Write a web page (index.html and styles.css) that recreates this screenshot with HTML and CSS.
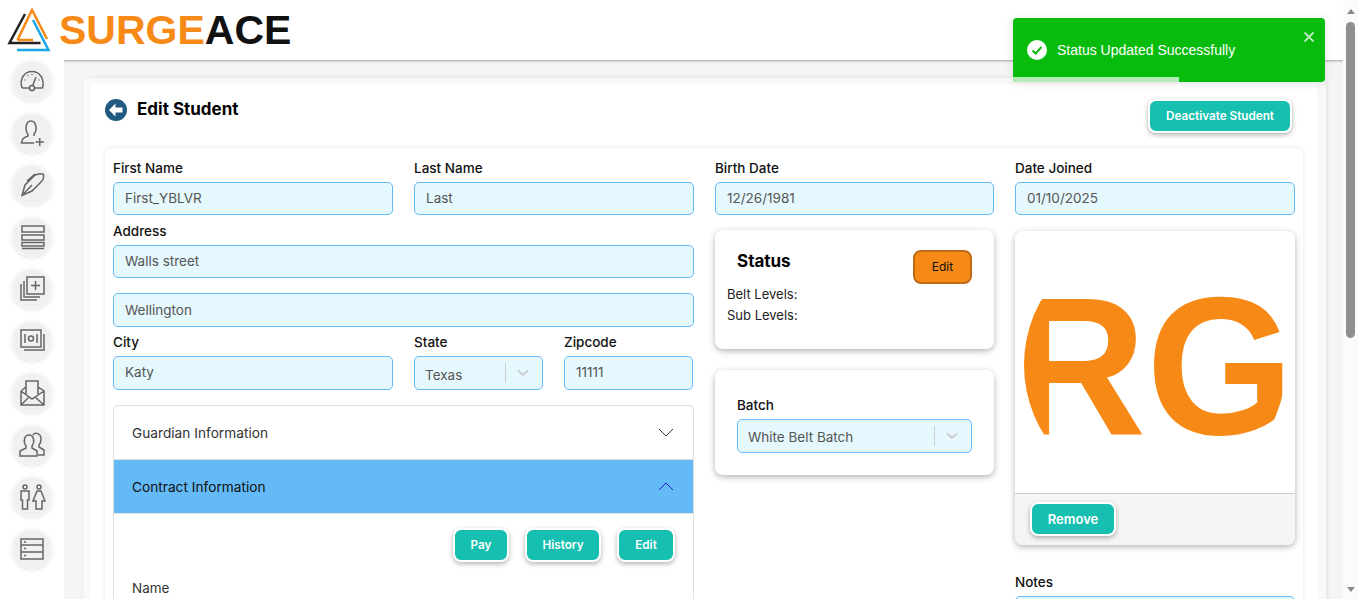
FILE: index.html
```html
<!DOCTYPE html>
<html lang="en">
<head>
    <meta charset="UTF-8">
    <meta name="viewport" content="width=device-width, initial-scale=1.0">
    <title>Edit Student</title>
    <link rel="stylesheet" href="styles.css">
</head>
<body>
    <div class="window">
        <div class="page">
            <header class="topbar">
                <svg class="logo-mark" width="44" height="44" viewBox="0 0 44 44" fill="none">
                    <path d="M18 6 L2.500 35 H33.500" stroke="#222" stroke-width="2.500"/>
                    <path d="M10.500 32 L25 2 L40 31 M10.500 32 H26" stroke="#f78a16" stroke-width="2.500"/>
                    <path d="M26 12 L41.500 42 H10" stroke="#1aa7e8" stroke-width="2.500"/>
                </svg>
                <div class="logo-text"><span class="logo-orange">SURGE</span>ACE</div>
            </header>

            <div class="below">
                <nav class="rail">
                    <a class="rail-btn"><svg viewBox="0 0 28 28"><path d="M4 21 C1 11 7 4.500 14 4.500 C21 4.500 27 11 24.500 21 H16.500 M11.500 21 H4 M14.500 19 L18 10"/><circle cx="14" cy="21" r="2.500"/><path d="M6.500 13 h1 M9.500 8.500 h1 M14 7 v1 M20.500 13 h1"/></svg></a>
                    <a class="rail-btn"><svg viewBox="0 0 28 28"><path d="M10 15 C7 12 7 2 13 2 C19 2 19 12 16 15 V17 M10 15 V17 C5 19 4 20 3.500 24 H16"/><path d="M17.500 23 H26 M21.750 19 V27"/></svg></a>
                    <a class="rail-btn"><svg viewBox="0 0 28 28"><path d="M4 24.500 L7 14 L16 5 C18 3 23 2 25.500 3.500 C26 6 25 9 23 11 L14 20 Z M4 24.500 L14 14 M9 10 L17 3"/></svg></a>
                    <a class="rail-btn"><svg viewBox="0 0 28 28"><path d="M4 3 H26 V9 H4 Z M4 12 H26 V17 H4 Z M4 19.500 H26 V23 H4 Z M4 25.500 H26"/></svg></a>
                    <a class="rail-btn"><svg viewBox="0 0 28 28"><path d="M9 2 H26 V19 H9 Z M17.500 6 V15 M13 10.500 H22 M6 6 V22 H22 M3 9 V25 H19"/></svg></a>
                    <a class="rail-btn"><svg viewBox="0 0 28 28"><path d="M3 3 H23 V20 H3 Z M6 23 H26 V7 M7 7 V16 M19 7 V16"/><circle cx="13" cy="11.500" r="2.500"/></svg></a>
                    <a class="rail-btn"><svg viewBox="0 0 28 28"><path d="M3 12 V26 H26 V12 L20 8 M3 12 L8 8 M8 15 V2 H20 V15 M3 12 L14 20 L26 12 M3 26 L11 18 M26 26 L17 18"/></svg></a>
                    <a class="rail-btn"><svg viewBox="0 0 28 28"><path d="M8 15 C5 11 6 4 11 4 C16 4 17 11 14 15 V17 L19 20 V25 H2 V20 L8 17 Z M15 4 C17 1 23 2 23 8 C23 11 22 13 21 14 V16 L26 19 V24 H20"/></svg></a>
                    <a class="rail-btn"><svg viewBox="0 0 28 28"><circle cx="7" cy="4" r="2"/><circle cx="21" cy="4" r="2"/><path d="M3 8 H11 V17 H9.500 V26 H4.500 V17 H3 Z M19 8 H23 L27 18 H24 V26 H18 V18 H15 Z"/></svg></a>
                    <a class="rail-btn"><svg viewBox="0 0 28 28"><path d="M3 4 H25 V10 H3 Z M3 10 H25 V17 H3 Z M3 17 H25 V24 H3 Z M6 7 h2 M6 13.500 h2 M6 20.500 h2"/></svg></a>
                </nav>

                <main class="main">
                    <section class="outer-card">
                        <div class="card-inner">
                            <div class="title-row">
                                <div class="title-left">
                                    <svg class="back-icon" width="22" height="22" viewBox="0 0 22 22">
                                        <circle cx="11" cy="11" r="11" fill="#215a80"/>
                                        <path d="M10.500 4.500 L4 11 L10.500 17.500 V13.500 H17.500 V8.500 H10.500 Z" fill="#fff"/>
                                    </svg>
                                    <h1 class="page-title">Edit Student</h1>
                                </div>
                                <button class="btn btn-deactivate">Deactivate Student</button>
                            </div>

                            <div class="form-card">
                                <div class="form-grid">
                                    <div class="col-wide">
                                        <div class="row-two">
                                            <div>
                                                <label class="field-label">First Name</label>
                                                <div class="input">First_YBLVR</div>
                                            </div>
                                            <div>
                                                <label class="field-label">Last Name</label>
                                                <div class="input">Last</div>
                                            </div>
                                        </div>
                                        <div class="field-address">
                                            <label class="field-label">Address</label>
                                            <div class="input">Walls street</div>
                                        </div>
                                        <div class="input input-second">Wellington</div>
                                        <div class="row-city">
                                            <div>
                                                <label class="field-label">City</label>
                                                <div class="input">Katy</div>
                                            </div>
                                            <div>
                                                <label class="field-label">State</label>
                                                <div class="input select">
                                                    <span class="select-value">Texas</span>
                                                    <span class="select-bar"></span>
                                                    <svg class="select-arrow" width="14" height="8" viewBox="0 0 14 8"><path d="M2 1.500 L7 6 L12 1.500"/></svg>
                                                </div>
                                            </div>
                                            <div>
                                                <label class="field-label">Zipcode</label>
                                                <div class="input">11111</div>
                                            </div>
                                        </div>

                                        <div class="accordion">
                                            <div class="acc-head">
                                                <span>Guardian Information</span>
                                                <svg width="16" height="9" viewBox="0 0 16 9"><path d="M1 1 L8 8 L15 1" class="acc-arrow"/></svg>
                                            </div>
                                            <div class="acc-head acc-open">
                                                <span>Contract Information</span>
                                                <svg width="16" height="9" viewBox="0 0 16 9"><path d="M1 8 L8 1 L15 8" class="acc-arrow acc-arrow-open"/></svg>
                                            </div>
                                            <div class="acc-body">
                                                <div class="acc-actions">
                                                    <button class="btn btn-pay">Pay</button>
                                                    <button class="btn btn-history">History</button>
                                                    <button class="btn btn-edit">Edit</button>
                                                </div>
                                                <div class="acc-label">Name</div>
                                            </div>
                                        </div>
                                    </div>

                                    <div class="col">
                                        <div>
                                            <label class="field-label">Birth Date</label>
                                            <div class="input">12/26/1981</div>
                                        </div>
                                        <div class="status-card">
                                            <div class="status-top">
                                                <h2 class="status-title">Status</h2>
                                                <button class="btn-orange">Edit</button>
                                            </div>
                                            <div class="status-line">Belt Levels:</div>
                                            <div class="status-line">Sub Levels:</div>
                                        </div>
                                        <div class="batch-card">
                                            <label class="field-label">Batch</label>
                                            <div class="input select">
                                                <span class="select-value">White Belt Batch</span>
                                                <span class="select-bar"></span>
                                                <svg class="select-arrow" width="14" height="8" viewBox="0 0 14 8"><path d="M2 1.500 L7 6 L12 1.500"/></svg>
                                            </div>
                                        </div>
                                    </div>

                                    <div class="col">
                                        <div>
                                            <label class="field-label">Date Joined</label>
                                            <div class="input">01/10/2025</div>
                                        </div>
                                        <div class="photo-card">
                                            <div class="photo-area">
                                                <div class="photo-circle"><span class="photo-initials">RG</span></div>
                                            </div>
                                            <div class="photo-foot">
                                                <button class="btn btn-remove">Remove</button>
                                            </div>
                                        </div>
                                        <div class="notes-field">
                                            <label class="field-label">Notes</label>
                                            <div class="input"></div>
                                        </div>
                                    </div>
                                </div>
                            </div>
                        </div>
                    </section>
                </main>
            </div>
        </div>

        <div class="scrollbar">
            <span class="scroll-up"></span>
            <span class="scroll-thumb"></span>
            <span class="scroll-down"></span>
        </div>

        <div class="toast">
            <svg width="20" height="20" viewBox="0 0 20 20">
                <circle cx="10" cy="10" r="10" fill="#fff"/>
                <path d="M5.500 10.500 L8.700 13.500 L14.500 6.800" fill="none" stroke="#07bc0c" stroke-width="2"/>
            </svg>
            <span class="toast-text">Status Updated Successfully</span>
            <svg class="toast-close" width="10" height="10" viewBox="0 0 10 10"><path d="M0.500 0.500 L9.500 9.500 M9.500 0.500 L0.500 9.500"/></svg>
            <div class="toast-progress"></div>
        </div>
    </div>
</body>
</html>
```

FILE: styles.css
```css
* {
    box-sizing: border-box;
}
html, body {
    margin: 0;
    height: 100%;
    overflow: hidden;
}
body {
    font-family: Inter, "Noto Sans", sans-serif;
    font-size: 14px;
    color: #111;
    background-color: #fff;
}
.window {
    position: relative;
    display: flex;
    height: 599px;
    overflow: hidden;
}
.page {
    flex: 1;
    min-width: 0;
    display: flex;
    flex-direction: column;
}

/* top */
.topbar {
    height: 60px;
    flex-shrink: 0;
    display: flex;
    align-items: flex-start;
    padding: 8px 0 0 7px;
    background-color: #fff;
}
.logo-text {
    margin-left: 8px;
    font-family: "Liberation Sans", Arial, sans-serif;
    font-weight: 700;
    font-size: 41px;
    line-height: 45px;
    color: #111;
}
.logo-orange {
    color: #f78a16;
}

/* left icons */
.below {
    flex: 1;
    display: flex;
    min-height: 0;
}
.rail {
    width: 64px;
    flex-shrink: 0;
    display: flex;
    flex-direction: column;
    align-items: center;
    gap: 12px;
    padding-top: 1px;
    background-color: #fff;
}
.rail-btn {
    width: 40px;
    height: 40px;
    flex-shrink: 0;
    display: flex;
    align-items: center;
    justify-content: center;
    border-radius: 50%;
    background-color: #f0f0f0;
    border: 1px solid #fafafa;
    box-shadow: 0 1px 4px rgba(0, 0, 0, 0.12);
}
.rail-btn svg {
    width: 28px;
    height: 28px;
    flex-shrink: 0;
    fill: none;
    stroke: #666;
    stroke-width: 1.500;
}

/* main */
.main {
    flex: 1;
    min-width: 0;
    padding: 18px 0 0 19px;
    background: linear-gradient(#a8a8a8, #d0d0d0 1px, #f5f5f5 3px);
}
.outer-card {
    width: 1243px;
    padding: 6px 9px 0 8px;
    border-radius: 8px 8px 0 0;
    background-color: #f9f9f9;
    box-shadow: 1px 0 4px rgba(0, 0, 0, 0.1);
}
.card-inner {
    padding: 0 14px;
    background-color: #fff;
}
.title-row {
    display: flex;
    justify-content: space-between;
    align-items: flex-start;
    height: 64px;
    padding: 15px 11px 0 0;
}
.title-left {
    display: flex;
    align-items: center;
    gap: 10px;
}
.page-title {
    margin: 0 0 2px 0;
    font-size: 17px;
    font-weight: 700;
    color: #000;
}
.btn {
    height: 34px;
    border: 2px solid #fff;
    border-radius: 8px;
    background-color: #16bfb0;
    color: #fff;
    font-family: inherit;
    font-size: 11.700px;
    font-weight: 600;
    box-shadow: 0 2px 5px rgba(0, 0, 0, 0.3);
}
.btn-deactivate {
    width: 144px;
}

/* form */
.form-card {
    padding: 8px;
    border-radius: 8px;
    background-color: #fff;
    box-shadow: 0 0 5px rgba(0, 0, 0, 0.1);
}
.form-grid {
    display: grid;
    grid-template-columns: 581px 279px 280px;
    column-gap: 21px;
}
.col-wide, .col {
    display: flex;
    flex-direction: column;
}
.row-two {
    display: grid;
    grid-template-columns: 280px 280px;
    column-gap: 21px;
}
.row-city {
    display: grid;
    grid-template-columns: 280px 129px 129px;
    column-gap: 21px;
    margin-top: 3px;
}
.field-label {
    display: block;
    height: 26px;
    line-height: 24px;
    font-size: 13.500px;
    font-weight: 500;
    color: #111;
}
.field-address {
    margin-top: 4px;
}
.input {
    height: 33px;
    display: flex;
    align-items: center;
    padding: 0 11px 2px 11px;
    border: 1px solid #63baf7;
    border-radius: 5px;
    background-color: #e5f8fd;
    font-size: 13.500px;
    color: #555;
}
.input-second {
    height: 34px;
    margin-top: 15px;
    padding-bottom: 0;
}
.row-city .input {
    height: 34px;
}
.input.select {
    padding: 0 12px 0 10px;
}
.select-value {
    flex: 1;
    padding-top: 3px;
}
.batch-card .select-value {
    padding-top: 1px;
}
.select-bar {
    width: 1px;
    height: 20px;
    background-color: #ccc;
}
.select-arrow {
    margin-left: 10px;
}
.select-arrow path {
    fill: none;
    stroke: #ccc;
    stroke-width: 2;
}

/* accordion */
.accordion {
    margin-top: 15px;
    height: 260px;
    border: 1px solid #dedede;
    border-radius: 5px 5px 0 0;
    background-color: #fff;
}
.acc-head {
    height: 54px;
    display: flex;
    align-items: center;
    justify-content: space-between;
    padding: 0 19px 0 18px;
    border-bottom: 1px solid #dedede;
    font-size: 13.700px;
    color: #333;
}
.acc-open {
    background-color: #63baf7;
    color: #111;
}
.acc-arrow {
    fill: none;
    stroke: #333;
    stroke-width: 1;
}
.acc-arrow-open {
    stroke: #2020c0;
}
.acc-body {
    padding: 14px 18px 0 18px;
}
.acc-actions {
    display: flex;
    justify-content: flex-end;
    gap: 16px;
}
.btn-pay {
    width: 56px;
}
.btn-history {
    width: 76px;
}
.btn-edit {
    width: 58px;
}
.acc-label {
    margin-top: 18px;
    font-size: 13.500px;
    color: #333;
}

/* status */
.status-card {
    height: 119px;
    margin-top: 15px;
    padding: 20px 22px 0 12px;
    border-radius: 8px;
    background-color: #fff;
    box-shadow: 0 2px 6px rgba(0, 0, 0, 0.3);
}
.status-top {
    display: flex;
    justify-content: space-between;
    align-items: flex-start;
    height: 34px;
    padding-left: 10px;
}
.status-title {
    margin: 1px 0 0 0;
    font-size: 17px;
    font-weight: 700;
    color: #000;
}
.btn-orange {
    width: 59px;
    height: 34px;
    flex-shrink: 0;
    padding-bottom: 3px;
    border: 2px solid #c06a18;
    border-radius: 8px;
    background-color: #f78a16;
    font-family: inherit;
    font-size: 12px;
    color: #111;
}
.status-line {
    height: 21px;
    line-height: 21px;
    font-size: 13px;
    color: #222;
}
.batch-card {
    height: 105px;
    margin-top: 21px;
    padding: 23px 22px 0 22px;
    border-radius: 8px;
    background-color: #fff;
    box-shadow: 0 2px 6px rgba(0, 0, 0, 0.3);
}
.batch-card .input {
    height: 34px;
}

/* photo */
.photo-card {
    margin-top: 16px;
    height: 314px;
    display: flex;
    flex-direction: column;
    overflow: hidden;
    border-radius: 8px;
    background-color: #fff;
    box-shadow: 0 2px 6px rgba(0, 0, 0, 0.3);
}
.photo-area {
    height: 263px;
    flex-shrink: 0;
    display: flex;
    justify-content: center;
    overflow: hidden;
    border-bottom: 1px solid #ccc;
}
.photo-circle {
    width: 262px;
    height: 262px;
    flex-shrink: 0;
    margin-top: 3px;
    display: flex;
    align-items: center;
    justify-content: center;
    overflow: hidden;
    border-radius: 50%;
}
.photo-initials {
    display: inline-block;
    padding-right: 7px;
    font-family: "Liberation Sans", Arial, sans-serif;
    font-size: 190px;
    font-weight: 700;
    line-height: 1;
    color: #f78a16;
    white-space: nowrap;
    transform: scaleY(1.040);
}
.photo-foot {
    flex: 1;
    padding: 8px 0 0 15px;
    background-color: #f5f5f5;
}
.btn-remove {
    width: 86px;
    height: 34px;
    font-size: 13px;
}
.notes-field {
    margin-top: 25px;
}

/* scrollbar */
.scrollbar {
    position: relative;
    width: 15px;
    flex-shrink: 0;
    display: flex;
    flex-direction: column;
    align-items: center;
    background-color: #fbfbfb;
}
.scroll-up {
    margin-top: 9px;
    border-left: 4px solid transparent;
    border-right: 4px solid transparent;
    border-bottom: 5px solid #8a8a8a;
}
.scroll-thumb {
    width: 9px;
    height: 316px;
    margin-top: 8px;
    border-radius: 5px;
    background-color: #8f8f8f;
}
.scroll-down {
    margin-top: auto;
    margin-bottom: 7px;
    border-left: 4px solid transparent;
    border-right: 4px solid transparent;
    border-top: 5px solid #8a8a8a;
}

/* toast */
.toast {
    position: absolute;
    top: 18px;
    left: 1013px;
    width: 312px;
    height: 64px;
    display: flex;
    align-items: center;
    padding-left: 14px;
    border-radius: 4px;
    overflow: hidden;
    background-color: #07bc0c;
    box-shadow: 0 1px 10px rgba(0, 0, 0, 0.1);
}
.toast-text {
    margin-left: 10px;
    font-family: "Liberation Sans", Arial, sans-serif;
    font-size: 14px;
    color: #fff;
}
.toast-close {
    position: absolute;
    top: 14px;
    right: 11px;
    fill: none;
    stroke: #c8eec9;
    stroke-width: 1.800;
}
.toast-progress {
    position: absolute;
    left: 0;
    bottom: 0;
    width: 166px;
    height: 5px;
    background-color: #b5ebb6;
}
```
